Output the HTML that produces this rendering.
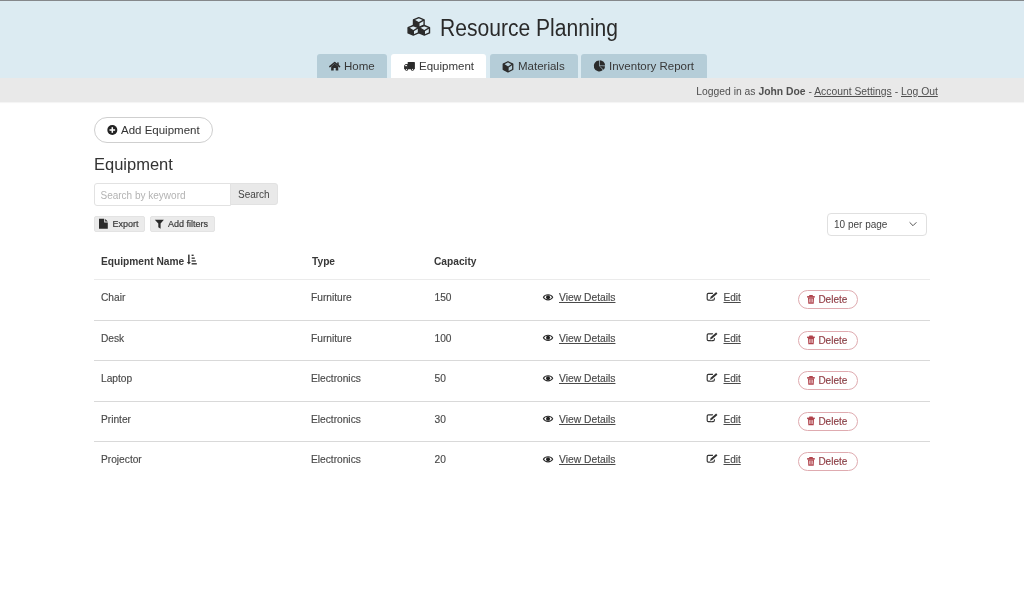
<!DOCTYPE html>
<html><head><meta charset="utf-8">
<style>
*{margin:0;padding:0;box-sizing:border-box}
html,body{will-change:transform;width:1024px;height:603px;overflow:hidden;background:#fff;font-family:"Liberation Sans",sans-serif;color:#333}
.a{position:absolute;white-space:nowrap}
#hdr{position:absolute;left:0;top:0;width:1024px;height:78px;background:#dcebf2;border-top:1px solid #85888b}
#bar{position:absolute;left:0;top:78px;width:1024px;height:24px;background:#e9e9e9;box-shadow:0 1px 1px rgba(0,0,0,0.04)}
.tab{position:absolute;top:54px;height:24px;background:#b5cdd8;border-radius:3px 3px 0 0;font-size:11.5px;line-height:24px;color:#383838}
.tab.on{background:#fff}
.tab span{position:absolute;top:0}
.btn{position:absolute;border:1px solid #cfcfcf;background:#fff}
.td{font-size:10.2px;line-height:12px;color:#4a4a4a;-webkit-text-stroke:0.15px #4a4a4a}
.row{position:absolute;left:94px;width:836px;height:1px;background:#d9d9d9}
.link{text-decoration:underline;text-underline-offset:1px;text-decoration-thickness:1px}
.del{position:absolute;left:798px;width:60px;height:19px;border:1px solid #dfabb0;border-radius:9.5px}
</style></head><body>
<div id="hdr"></div>
<div id="bar"></div>

<div class="a" style="left:439.5px;top:13.5px;font-size:23px;line-height:28px;color:#2a2a2a;transform:scaleX(0.916);transform-origin:0 0">Resource Planning</div>

<div class="tab" style="left:317px;width:70px"><span style="left:27px">Home</span></div>
<div class="tab on" style="left:391px;width:95px"><span style="left:28px">Equipment</span></div>
<div class="tab" style="left:490px;width:88px"><span style="left:28px">Materials</span></div>
<div class="tab" style="left:581px;width:126px"><span style="left:28px">Inventory Report</span></div>

<div class="a" style="left:696.3px;top:85.6px;font-size:10.35px;line-height:12px;color:#505050">Logged in as <b>John Doe</b> - <span class="link">Account Settings</span> - <span class="link">Log Out</span></div>

<div class="btn" style="left:94px;top:117px;width:119px;height:26px;border-radius:13px"></div>
<div class="a" style="left:121px;top:123px;font-size:11.5px;line-height:14px">Add Equipment</div>

<div class="a" style="left:94px;top:155px;font-size:16.5px;line-height:19px">Equipment</div>

<div class="btn" style="left:94px;top:183px;width:137px;height:23px;border-radius:3px 0 0 3px;border-color:#e2e2e2"></div>
<div class="a" style="left:100.5px;top:189.5px;font-size:10px;line-height:12px;color:#b3b3b3">Search by keyword</div>
<div class="btn" style="left:230px;top:183px;width:48px;height:22px;border-radius:0 3px 3px 0;background:#e9e9e9;border-color:#e2e2e2"></div>
<div class="a" style="left:238px;top:189px;font-size:10px;line-height:12px;color:#444">Search</div>

<div class="btn" style="left:94px;top:216px;width:51px;height:16px;border-radius:2px;background:#ebebeb;border-color:#e3e3e3"></div>
<div class="a" style="left:112.5px;top:219px;font-size:9px;line-height:11px;color:#3a3a3a;-webkit-text-stroke:0.2px #3a3a3a">Export</div>
<div class="btn" style="left:150px;top:216px;width:65px;height:16px;border-radius:2px;background:#ebebeb;border-color:#e3e3e3"></div>
<div class="a" style="left:168px;top:219px;font-size:9px;line-height:11px;color:#3a3a3a;-webkit-text-stroke:0.2px #3a3a3a">Add filters</div>

<div class="btn" style="left:827px;top:213px;width:100px;height:22.5px;border-radius:4px;border-color:#e0e0e0"></div>
<div class="a" style="left:834px;top:219.2px;font-size:10px;line-height:12px;color:#444">10 per page</div>

<div class="a" style="left:101px;top:256px;font-size:10.2px;line-height:12px;font-weight:bold;color:#383838">Equipment Name</div>
<div class="a" style="left:312px;top:256px;font-size:10.2px;line-height:12px;font-weight:bold;color:#383838">Type</div>
<div class="a" style="left:434px;top:256px;font-size:10.2px;line-height:12px;font-weight:bold;color:#383838">Capacity</div>
<div class="row" style="top:279px;background:#ebebeb"></div>

<div class="a td" style="left:101px;top:292.0px">Chair</div>
<div class="a td" style="left:311px;top:292.0px">Furniture</div>
<div class="a td" style="left:434.5px;top:292.0px">150</div>
<div class="a td link" style="left:559px;top:292.0px;font-size:10.3px">View Details</div>
<div class="a td link" style="left:723.5px;top:292.0px;font-size:10px">Edit</div>
<div class="del" style="top:290.3px"></div>
<div class="a td" style="left:818.4px;top:294.0px;font-size:10px;color:#aa3a44">Delete</div>
<div class="row" style="top:319.5px"></div>
<div class="a td" style="left:101px;top:332.5px">Desk</div>
<div class="a td" style="left:311px;top:332.5px">Furniture</div>
<div class="a td" style="left:434.5px;top:332.5px">100</div>
<div class="a td link" style="left:559px;top:332.5px;font-size:10.3px">View Details</div>
<div class="a td link" style="left:723.5px;top:332.5px;font-size:10px">Edit</div>
<div class="del" style="top:330.8px"></div>
<div class="a td" style="left:818.4px;top:334.5px;font-size:10px;color:#aa3a44">Delete</div>
<div class="row" style="top:360.0px"></div>
<div class="a td" style="left:101px;top:373.0px">Laptop</div>
<div class="a td" style="left:311px;top:373.0px">Electronics</div>
<div class="a td" style="left:434.5px;top:373.0px">50</div>
<div class="a td link" style="left:559px;top:373.0px;font-size:10.3px">View Details</div>
<div class="a td link" style="left:723.5px;top:373.0px;font-size:10px">Edit</div>
<div class="del" style="top:371.3px"></div>
<div class="a td" style="left:818.4px;top:375.0px;font-size:10px;color:#aa3a44">Delete</div>
<div class="row" style="top:400.5px"></div>
<div class="a td" style="left:101px;top:413.5px">Printer</div>
<div class="a td" style="left:311px;top:413.5px">Electronics</div>
<div class="a td" style="left:434.5px;top:413.5px">30</div>
<div class="a td link" style="left:559px;top:413.5px;font-size:10.3px">View Details</div>
<div class="a td link" style="left:723.5px;top:413.5px;font-size:10px">Edit</div>
<div class="del" style="top:411.8px"></div>
<div class="a td" style="left:818.4px;top:415.5px;font-size:10px;color:#aa3a44">Delete</div>
<div class="row" style="top:441.0px"></div>
<div class="a td" style="left:101px;top:454.0px">Projector</div>
<div class="a td" style="left:311px;top:454.0px">Electronics</div>
<div class="a td" style="left:434.5px;top:454.0px">20</div>
<div class="a td link" style="left:559px;top:454.0px;font-size:10.3px">View Details</div>
<div class="a td link" style="left:723.5px;top:454.0px;font-size:10px">Edit</div>
<div class="del" style="top:452.3px"></div>
<div class="a td" style="left:818.4px;top:456.0px;font-size:10px;color:#aa3a44">Delete</div>
<svg style="position:absolute;left:0;top:0" width="1024" height="603" viewBox="0 0 1024 603"><path d="M418.80,17.70 L424.10,19.86 L424.10,25.14 L418.80,27.30 L413.50,25.14 L413.50,19.86 Z" fill="#dcebf2" stroke="#2b2b2b" stroke-width="1.40" stroke-linejoin="round"/><path d="M413.50,19.86 L418.80,22.94 L418.80,27.30 L413.50,25.14 Z" fill="#2b2b2b"/><path d="M413.50,19.86 L418.80,22.94 L424.10,19.86 M418.80,22.94 L418.80,27.30" fill="none" stroke="#2b2b2b" stroke-width="1.40"/><path d="M413.30,25.50 L418.50,27.66 L418.50,32.94 L413.30,35.10 L408.10,32.94 L408.10,27.66 Z" fill="#dcebf2" stroke="#2b2b2b" stroke-width="1.40" stroke-linejoin="round"/><path d="M408.10,27.66 L413.30,30.74 L413.30,35.10 L408.10,32.94 Z" fill="#2b2b2b"/><path d="M408.10,27.66 L413.30,30.74 L418.50,27.66 M413.30,30.74 L413.30,35.10" fill="none" stroke="#2b2b2b" stroke-width="1.40"/><path d="M424.30,25.50 L429.50,27.66 L429.50,32.94 L424.30,35.10 L419.10,32.94 L419.10,27.66 Z" fill="#dcebf2" stroke="#2b2b2b" stroke-width="1.40" stroke-linejoin="round"/><path d="M419.10,27.66 L424.30,30.74 L424.30,35.10 L419.10,32.94 Z" fill="#2b2b2b"/><path d="M419.10,27.66 L424.30,30.74 L429.50,27.66 M424.30,30.74 L424.30,35.10" fill="none" stroke="#2b2b2b" stroke-width="1.40"/><path d="M329.8,66.6 L334.7,62.5 L339.6,66.6" fill="none" stroke="#2b2b2b" stroke-width="1.5" stroke-linecap="round" stroke-linejoin="round"/><rect x="337.2" y="62.4" width="1.5" height="2.6" fill="#2b2b2b"/><path d="M331.2,66.4 L334.7,63.6 L338.2,66.4 L338.3,70.6 L335.7,70.6 L335.7,68.0 L333.7,68.0 L333.7,70.6 L331.1,70.6 Z" fill="#2b2b2b"/><rect x="407.7" y="62.1" width="7.2" height="7.1" rx="0.4" fill="#2b2b2b"/><path d="M404.1,65.6 L405.6,64.1 L407.9,64.1 L407.9,69.2 L404.1,69.2 Z" fill="#2b2b2b"/><rect x="405.2" y="64.9" width="1.7" height="1.3" fill="#fff"/><circle cx="406.6" cy="69.4" r="1.45" fill="#2b2b2b" /><circle cx="406.6" cy="69.4" r="0.55" fill="#fff"/><circle cx="412.4" cy="69.4" r="1.45" fill="#2b2b2b" /><circle cx="412.4" cy="69.4" r="0.55" fill="#fff"/><path d="M508.00,61.75 L512.75,64.06 L512.75,69.54 L508.00,71.85 L503.25,69.54 L503.25,64.06 Z" fill="#b5cdd8" stroke="#2b2b2b" stroke-width="1.30" stroke-linejoin="round"/><path d="M503.25,64.06 L508.00,67.26 L508.00,71.85 L503.25,69.54 Z" fill="#2b2b2b"/><path d="M503.25,64.06 L508.00,67.26 L512.75,64.06 M508.00,67.26 L508.00,71.85" fill="none" stroke="#2b2b2b" stroke-width="1.30"/><path d="M599.20,66.00 L602.88,70.09 A5.50,5.50 0 1 1 599.20,60.50 Z" fill="#2b2b2b"/><path d="M599.80,65.50 L599.80,60.20 A5.30,5.30 0 0 1 605.10,65.50 Z" fill="#2b2b2b"/><path d="M599.70,66.10 L605.00,66.19 A5.30,5.30 0 0 1 603.58,69.71 Z" fill="#2b2b2b"/><circle cx="112.3" cy="130.0" r="5.0" fill="#222"/><rect x="109.5" y="129.25" width="5.6" height="1.5" fill="#fff"/><rect x="111.55" y="127.2" width="1.5" height="5.6" fill="#fff"/><path d="M99,218.8 L104.2,218.8 L104.2,222.6 L107.8,222.6 L107.8,228.8 L99,228.8 Z" fill="#2b2b2b"/><path d="M105.2,218.9 L107.8,221.5 L105.2,221.5 Z" fill="#2b2b2b"/><path d="M154.8,219.8 L163.9,219.8 L160.6,223.6 L160.6,228.8 L158.3,227.3 L158.3,223.6 Z" fill="#2b2b2b"/><path d="M909.6,222.3 L913.0,225.7 L916.4,222.3" fill="none" stroke="#555" stroke-width="1.0"/><rect x="188.1" y="254.6" width="1.5" height="8.4" fill="#333"/><path d="M186.8,262.0 L190.9,262.0 L188.85,264.4 Z" fill="#333"/><rect x="191.6" y="254.6" width="2.0" height="1.4" fill="#333"/><rect x="191.6" y="257.5" width="3.2" height="1.3" fill="#333"/><rect x="191.6" y="260.3" width="4.2" height="1.3" fill="#333"/><rect x="191.6" y="263.1" width="5.2" height="1.4" fill="#333"/><g transform="translate(0,0.00)"><path d="M543.4,297.3 C545.2,293.9 550.9,293.9 552.7,297.3 C550.9,300.7 545.2,300.7 543.4,297.3 Z" fill="#fff" stroke="#2b2b2b" stroke-width="1.05"/><circle cx="548.05" cy="297.2" r="2.0" fill="#222"/><path d="M713.0,293.4 L708.4,293.4 Q707.2,293.4 707.2,294.6 L707.2,298.9 Q707.2,300.1 708.4,300.1 L713.1,300.1 Q714.3,300.1 714.3,298.9 L714.3,297.4" fill="none" stroke="#333" stroke-width="1.15"/><path d="M711.0,297.9 L716.3,293.2" fill="none" stroke="#fff" stroke-width="3.6" stroke-linecap="round"/><path d="M710.0,298.9 L710.69,296.85 L716.14,292.05 L717.46,293.55 L712.01,298.35 Z" fill="#333"/><rect x="807.1" y="296.1" width="7.7" height="1.5" fill="#b0424b"/><path d="M809.0,296.4 L809.3,295.0 L812.7,295.0 L813.0,296.4 Z" fill="#b0424b"/><path d="M808.0,297.4 L814.0,297.4 L813.7,303.8 L808.3,303.8 Z" fill="#b0424b"/><rect x="809.2" y="298.6" width="3.6" height="3.8" fill="#e7c4c7"/><rect x="810.35" y="298.6" width="0.5" height="3.8" fill="#b0424b"/><rect x="811.4" y="298.6" width="0.5" height="3.8" fill="#b0424b"/></g><g transform="translate(0,40.50)"><path d="M543.4,297.3 C545.2,293.9 550.9,293.9 552.7,297.3 C550.9,300.7 545.2,300.7 543.4,297.3 Z" fill="#fff" stroke="#2b2b2b" stroke-width="1.05"/><circle cx="548.05" cy="297.2" r="2.0" fill="#222"/><path d="M713.0,293.4 L708.4,293.4 Q707.2,293.4 707.2,294.6 L707.2,298.9 Q707.2,300.1 708.4,300.1 L713.1,300.1 Q714.3,300.1 714.3,298.9 L714.3,297.4" fill="none" stroke="#333" stroke-width="1.15"/><path d="M711.0,297.9 L716.3,293.2" fill="none" stroke="#fff" stroke-width="3.6" stroke-linecap="round"/><path d="M710.0,298.9 L710.69,296.85 L716.14,292.05 L717.46,293.55 L712.01,298.35 Z" fill="#333"/><rect x="807.1" y="296.1" width="7.7" height="1.5" fill="#b0424b"/><path d="M809.0,296.4 L809.3,295.0 L812.7,295.0 L813.0,296.4 Z" fill="#b0424b"/><path d="M808.0,297.4 L814.0,297.4 L813.7,303.8 L808.3,303.8 Z" fill="#b0424b"/><rect x="809.2" y="298.6" width="3.6" height="3.8" fill="#e7c4c7"/><rect x="810.35" y="298.6" width="0.5" height="3.8" fill="#b0424b"/><rect x="811.4" y="298.6" width="0.5" height="3.8" fill="#b0424b"/></g><g transform="translate(0,81.00)"><path d="M543.4,297.3 C545.2,293.9 550.9,293.9 552.7,297.3 C550.9,300.7 545.2,300.7 543.4,297.3 Z" fill="#fff" stroke="#2b2b2b" stroke-width="1.05"/><circle cx="548.05" cy="297.2" r="2.0" fill="#222"/><path d="M713.0,293.4 L708.4,293.4 Q707.2,293.4 707.2,294.6 L707.2,298.9 Q707.2,300.1 708.4,300.1 L713.1,300.1 Q714.3,300.1 714.3,298.9 L714.3,297.4" fill="none" stroke="#333" stroke-width="1.15"/><path d="M711.0,297.9 L716.3,293.2" fill="none" stroke="#fff" stroke-width="3.6" stroke-linecap="round"/><path d="M710.0,298.9 L710.69,296.85 L716.14,292.05 L717.46,293.55 L712.01,298.35 Z" fill="#333"/><rect x="807.1" y="296.1" width="7.7" height="1.5" fill="#b0424b"/><path d="M809.0,296.4 L809.3,295.0 L812.7,295.0 L813.0,296.4 Z" fill="#b0424b"/><path d="M808.0,297.4 L814.0,297.4 L813.7,303.8 L808.3,303.8 Z" fill="#b0424b"/><rect x="809.2" y="298.6" width="3.6" height="3.8" fill="#e7c4c7"/><rect x="810.35" y="298.6" width="0.5" height="3.8" fill="#b0424b"/><rect x="811.4" y="298.6" width="0.5" height="3.8" fill="#b0424b"/></g><g transform="translate(0,121.50)"><path d="M543.4,297.3 C545.2,293.9 550.9,293.9 552.7,297.3 C550.9,300.7 545.2,300.7 543.4,297.3 Z" fill="#fff" stroke="#2b2b2b" stroke-width="1.05"/><circle cx="548.05" cy="297.2" r="2.0" fill="#222"/><path d="M713.0,293.4 L708.4,293.4 Q707.2,293.4 707.2,294.6 L707.2,298.9 Q707.2,300.1 708.4,300.1 L713.1,300.1 Q714.3,300.1 714.3,298.9 L714.3,297.4" fill="none" stroke="#333" stroke-width="1.15"/><path d="M711.0,297.9 L716.3,293.2" fill="none" stroke="#fff" stroke-width="3.6" stroke-linecap="round"/><path d="M710.0,298.9 L710.69,296.85 L716.14,292.05 L717.46,293.55 L712.01,298.35 Z" fill="#333"/><rect x="807.1" y="296.1" width="7.7" height="1.5" fill="#b0424b"/><path d="M809.0,296.4 L809.3,295.0 L812.7,295.0 L813.0,296.4 Z" fill="#b0424b"/><path d="M808.0,297.4 L814.0,297.4 L813.7,303.8 L808.3,303.8 Z" fill="#b0424b"/><rect x="809.2" y="298.6" width="3.6" height="3.8" fill="#e7c4c7"/><rect x="810.35" y="298.6" width="0.5" height="3.8" fill="#b0424b"/><rect x="811.4" y="298.6" width="0.5" height="3.8" fill="#b0424b"/></g><g transform="translate(0,162.00)"><path d="M543.4,297.3 C545.2,293.9 550.9,293.9 552.7,297.3 C550.9,300.7 545.2,300.7 543.4,297.3 Z" fill="#fff" stroke="#2b2b2b" stroke-width="1.05"/><circle cx="548.05" cy="297.2" r="2.0" fill="#222"/><path d="M713.0,293.4 L708.4,293.4 Q707.2,293.4 707.2,294.6 L707.2,298.9 Q707.2,300.1 708.4,300.1 L713.1,300.1 Q714.3,300.1 714.3,298.9 L714.3,297.4" fill="none" stroke="#333" stroke-width="1.15"/><path d="M711.0,297.9 L716.3,293.2" fill="none" stroke="#fff" stroke-width="3.6" stroke-linecap="round"/><path d="M710.0,298.9 L710.69,296.85 L716.14,292.05 L717.46,293.55 L712.01,298.35 Z" fill="#333"/><rect x="807.1" y="296.1" width="7.7" height="1.5" fill="#b0424b"/><path d="M809.0,296.4 L809.3,295.0 L812.7,295.0 L813.0,296.4 Z" fill="#b0424b"/><path d="M808.0,297.4 L814.0,297.4 L813.7,303.8 L808.3,303.8 Z" fill="#b0424b"/><rect x="809.2" y="298.6" width="3.6" height="3.8" fill="#e7c4c7"/><rect x="810.35" y="298.6" width="0.5" height="3.8" fill="#b0424b"/><rect x="811.4" y="298.6" width="0.5" height="3.8" fill="#b0424b"/></g></svg>
</body></html>
